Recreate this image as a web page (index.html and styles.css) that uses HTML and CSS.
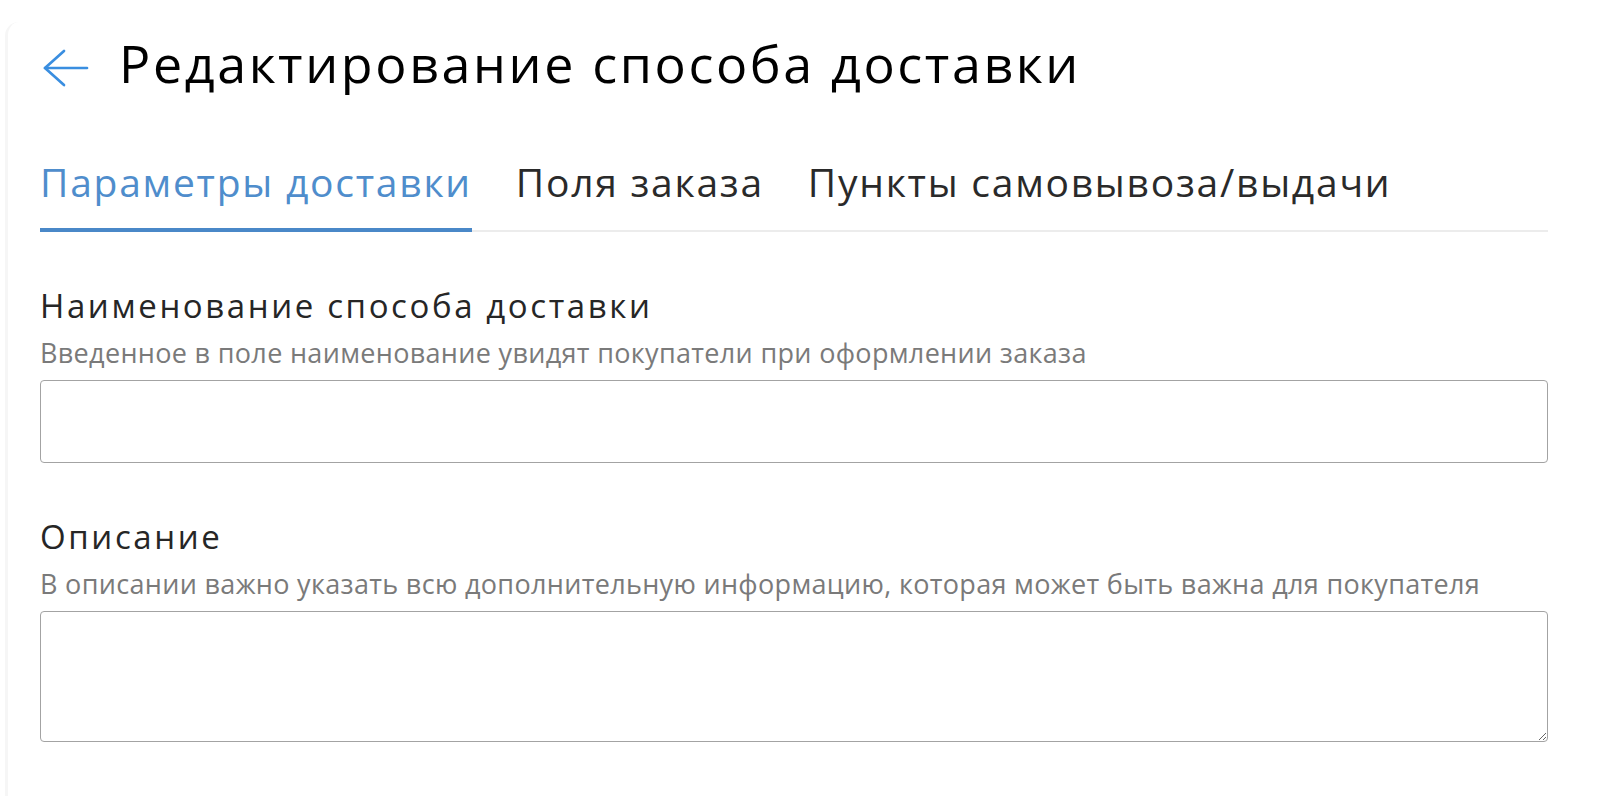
FILE: index.html
```html
<!DOCTYPE html>
<html lang="ru">
<head>
<meta charset="utf-8">
<title>Редактирование способа доставки</title>
<link rel="stylesheet" href="styles.css">
</head>
<body>
<div class="card">
  <header class="header">
    <a class="back" href="#" aria-label="Назад">
      <svg width="46" height="38" viewBox="0 0 46 38" fill="none" stroke="#3a8ee0" stroke-width="2.7" stroke-linecap="round" stroke-linejoin="round">
        <path d="M2 19H44"/>
        <path d="M21 2L2 19L21 36"/>
      </svg>
    </a>
    <h1 class="title">Редактирование способа доставки</h1>
  </header>
  <nav class="tabs">
    <a class="tab active" href="#">Параметры доставки</a>
    <a class="tab" href="#">Поля заказа</a>
    <a class="tab" href="#">Пункты самовывоза/выдачи</a>
  </nav>
  <div class="field">
    <label class="label" for="name">Наименование способа доставки</label>
    <p class="hint">Введенное в поле наименование увидят покупатели при оформлении заказа</p>
    <input class="input" id="name" type="text">
  </div>
  <div class="field">
    <label class="label" for="desc">Описание</label>
    <p class="hint">В описании важно указать всю дополнительную информацию, которая может быть важна для покупателя</p>
    <textarea class="textarea" id="desc"></textarea>
  </div>
</div>
</body>
</html>
```
FILE: styles.css
```css
* { box-sizing: border-box; }
html, body { margin: 0; padding: 0; background: #ffffff; }
body {
  font-family: "Open Sans", "Noto Sans", sans-serif;
  color: #222;
}
.card {
  margin: 22px 0 0 5px;
  border-left: 3px solid #f6f6f6;
  border-top-left-radius: 14px;
  padding: 5px 52px 40px 32px;
  min-height: 774px;
}
.header {
  display: flex;
  align-items: flex-start;
}
.back {
  display: block;
  margin: 22px 0 0 3px;
  width: 46px;
  height: 38px;
}
.back svg { display: block; }
.title {
  margin: 0 0 0 30px;
  font-size: 52px;
  line-height: 72px;
  font-weight: 500;
  letter-spacing: 2.6px;
  color: #000;
}
.tabs {
  display: flex;
  gap: 44px;
  margin-top: 57px;
  border-bottom: 2px solid #ececec;
}
.tab {
  display: block;
  font-size: 39px;
  line-height: 52px;
  font-weight: 500;
  letter-spacing: 1.75px;
  color: #2a2a2a;
  text-decoration: none;
  padding-bottom: 20px;
  margin-bottom: -2px;
  border-bottom: 4px solid transparent;
}
.tab.active {
  color: #4f8dcc;
  border-bottom-color: #4a88c8;
}
.field { margin-top: 52px; }
.label {
  display: block;
  font-size: 33px;
  line-height: 44px;
  font-weight: 500;
  letter-spacing: 2.6px;
  color: #262626;
}
.hint {
  margin: 7px 0 0;
  font-size: 27px;
  line-height: 36px;
  letter-spacing: 0.32px;
  color: #7a7a7a;
}
.input, .textarea {
  display: block;
  width: 100%;
  margin-top: 9px;
  border: 1px solid #a3a3a3;
  border-radius: 4px;
  background: #fff;
  font-family: inherit;
  font-size: 27px;
  padding: 10px 16px;
  outline: none;
}
.input { height: 83px; }
.textarea { height: 131px; resize: vertical; }
```
